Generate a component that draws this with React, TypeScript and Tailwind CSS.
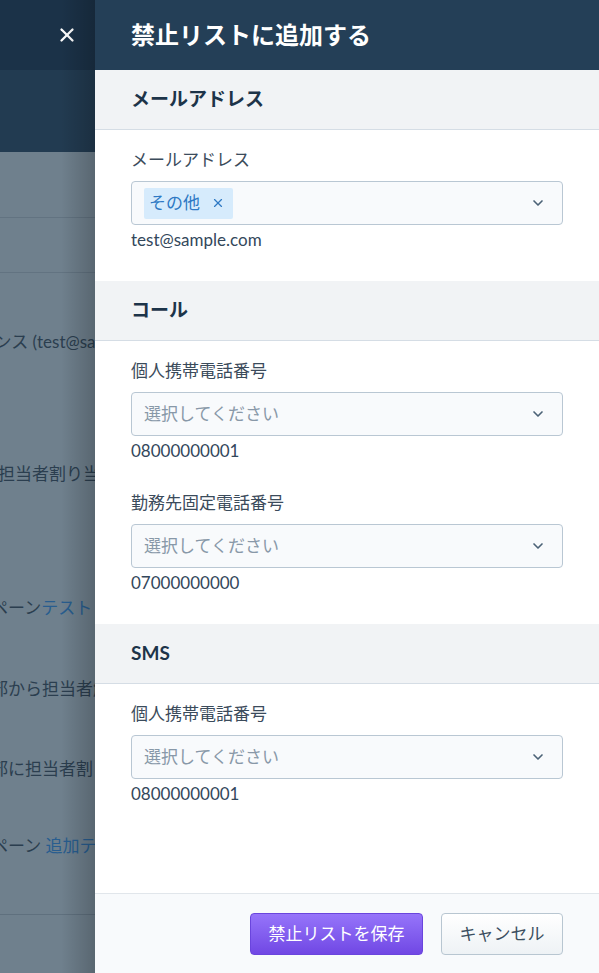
import { ChevronDown, X } from 'lucide-react'

type Field = {
  label?: string
  value: string
  tag?: string
}

type Section = {
  title: string
  fields: Field[]
}

const sections: Section[] = [
  {
    title: 'メールアドレス',
    fields: [{ label: 'メールアドレス', tag: 'その他', value: 'test@sample.com' }],
  },
  {
    title: 'コール',
    fields: [
      { label: '個人携帯電話番号', value: '08000000001' },
      { label: '勤務先固定電話番号', value: '07000000000' },
    ],
  },
  {
    title: 'SMS',
    fields: [{ label: '個人携帯電話番号', value: '08000000001' }],
  },
]

const font = { fontFamily: 'Lato, "Noto Sans CJK JP", sans-serif' }

function BackdropPage() {
  // the page behind the drawer, dimmed
  return (
    <div className="relative flex w-[95px] shrink-0 flex-col overflow-hidden">
      <div className="flex h-[70px] items-center justify-end bg-[#1b3248] pr-[17px]">
        <X className="h-[22px] w-[22px] text-white" strokeWidth={2.5} />
      </div>
      <div className="h-[82px] bg-[#223b51]" />
      <div className="flex flex-1 flex-col bg-[#6f808d] text-[17px] leading-[24px] text-[#2b3e4f]">
        <div className="h-[66px] border-b border-[#627381]" />
        <div className="h-[55px] border-b border-[#627381]" />
        <p className="mt-[57px] -ml-[56px] whitespace-nowrap">シーケンス (test@sample.com)</p>
        <p className="mt-[108px] -ml-[2px] whitespace-nowrap">担当者割り当て</p>
        <p className="mt-[110px] -ml-[9px] whitespace-nowrap">
          ペーン<span className="text-[#285d8f]">テスト</span>
        </p>
        <p className="mt-[57px] -ml-[9px] whitespace-nowrap">部から担当者解除</p>
        <p className="mt-[56px] -ml-[9px] whitespace-nowrap">部に担当者割り当て</p>
        <p className="mt-[53px] -ml-[9px] whitespace-nowrap">
          ペーン <span className="text-[#285d8f]">追加テスト</span>
        </p>
        <div className="mt-[56px] border-t border-[#5f707e]" />
      </div>
      <div className="pointer-events-none absolute inset-y-0 right-0 w-[34px] bg-gradient-to-r from-transparent to-black/20" />
    </div>
  )
}

function SelectBox({ tag }: { tag?: string }) {
  return (
    <div className="flex h-[44px] items-center rounded-[4px] border border-[#b9c7d3] bg-[#f8fafc] pl-[12px] pr-[16px]">
      <div className="flex-1">
        {tag ? (
          <span className="inline-flex h-[31px] items-center gap-[11px] rounded-[2px] bg-[#d6ebfc] pl-[5px] pr-[8px] text-[17px] text-[#2e79c4]">
            {tag}
            <X className="h-[14px] w-[14px]" strokeWidth={2} />
          </span>
        ) : (
          <span className="text-[17px] text-[#8898a8]">選択してください</span>
        )}
      </div>
      <ChevronDown className="h-[16px] w-[16px] text-[#4b6276]" strokeWidth={2.5} />
    </div>
  )
}

function FormSection({ section }: { section: Section }) {
  return (
    <section>
      <h2 className="flex h-[60px] items-center border-b border-[#d5dde5] bg-[#f1f3f5] px-[36px] text-[19px] font-bold text-[#1d3449]">
        {section.title}
      </h2>
      <div className="flex flex-col gap-[29px] px-[36px] pb-[30px] pt-[18px]">
        {section.fields.map((field, i) => (
          <div key={i}>
            <label className="mb-[9px] block text-[17px] leading-[24px] text-[#3b4b5b]">{field.label}</label>
            <SelectBox tag={field.tag} />
            <p className="mt-[4px] text-[17px] leading-[22px] text-[#33475b]">{field.value}</p>
          </div>
        ))}
      </div>
    </section>
  )
}

export default function App() {
  return (
    <div className="flex h-[973px] w-full overflow-hidden" style={font}>
      <BackdropPage />
      <aside className="flex flex-1 flex-col bg-white">
        <header className="flex h-[70px] shrink-0 items-center bg-[#243f57] px-[36px]">
          <h1 className="text-[24px] font-bold text-white">禁止リストに追加する</h1>
        </header>
        <div className="flex-1">
          {sections.map((s) => (
            <FormSection key={s.title} section={s} />
          ))}
        </div>
        <footer className="flex h-[80px] shrink-0 items-center justify-end gap-[18px] border-t border-[#e1e6eb] bg-[#f8fafc] px-[36px]">
          <button className="h-[42px] w-[173px] rounded-[4px] border border-[#6a45dd] bg-gradient-to-b from-[#9674fa] to-[#7147e4] text-[17px] text-white">
            禁止リストを保存
          </button>
          <button className="h-[42px] w-[122px] rounded-[4px] border border-[#b8c6d1] bg-gradient-to-b from-white to-[#eef2f5] text-[17px] text-[#3b4e60]">
            キャンセル
          </button>
        </footer>
      </aside>
    </div>
  )
}
